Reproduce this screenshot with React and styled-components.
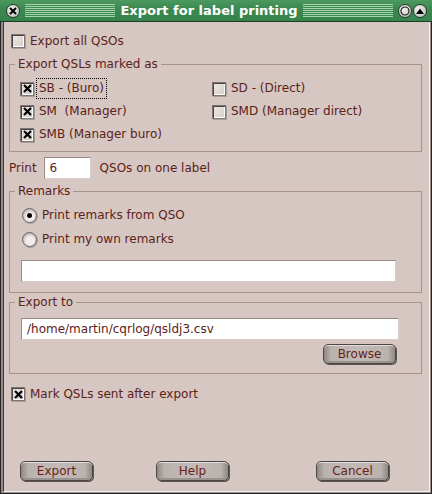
import React from "react";
import styled, { createGlobalStyle } from "styled-components";

const Global = createGlobalStyle`
  html, body { margin: 0; padding: 0; background: #d6c7c3; }
  body {
    font-family: "DejaVu Sans", "Liberation Sans", sans-serif;
    font-size: 12px;
    color: #5c2218;
  }
`;

const Window = styled.div`
  width: 432px;
  height: 494px;
  display: flex;
  flex-direction: column;
  box-sizing: border-box;
`;

const TitleBar = styled.div`
  height: 21px;
  flex: none;
  display: flex;
  align-items: center;
  background: linear-gradient(#4c9a60, #3b8850 40%, #37834c);
  border-bottom: 1px solid #1d3a26;
  padding: 0 5px 0 6px;
  gap: 5px;
`;

const Stripes = styled.div`
  flex: 1;
  height: 13px;
  background: repeating-linear-gradient(
    to bottom,
    #a3d2ab 0 1px,
    #3c8a52 1px 2px
  );
`;

const Title = styled.div`
  font-family: "DejaVu Sans", "Liberation Sans", sans-serif;
  font-weight: bold;
  font-size: 13px;
  color: #ffffff;
  white-space: nowrap;
  padding: 0 0 1px;
`;

const TitleButton = styled.span`
  width: 14px;
  height: 14px;
  border-radius: 50%;
  box-sizing: border-box;
  border: 1px solid #2a3a2e;
  background: radial-gradient(circle at 40% 35%, #f4f4f2, #c8c8c4 70%, #9c9c98);
  display: inline-flex;
  align-items: center;
  justify-content: center;
  flex: none;
`;

const TitleButtons = styled.div`
  display: flex;
  gap: 1px;
  flex: none;
`;

const Frame = styled.div`
  flex: 1;
  display: flex;
  border: 1px solid #2a2626;
  border-top: 0;
  padding: 0 1px 1px 2px;
  background: #948c8a;
`;

const Body = styled.div`
  flex: 1;
  display: flex;
  flex-direction: column;
  background: #d6c7c3;
  border-left: 1px solid #403838;
  border-right: 1px solid #f6f2f0;
  border-bottom: 1px solid #f6f2f0;
  padding: 0 7px 0 5px;
`;

const Row = styled.div`
  display: flex;
  align-items: center;
  height: ${(p) => p.$h || 20}px;
  margin-top: ${(p) => p.$mt || 0}px;
  padding-left: ${(p) => p.$pl || 0}px;
`;

const Group = styled.fieldset`
  margin: ${(p) => p.$mt || 0}px 0 0;
  padding: 0;
  border: 1px solid #a8928a;
  min-width: 0;
`;

const Legend = styled.legend`
  padding: 0 3px;
  margin-left: 5px;
  line-height: 14px;
  font-size: 12px;
  color: #5c2218;
`;

const GroupInner = styled.div`
  padding: ${(p) => p.$pad};
`;

const CheckGrid = styled.div`
  display: grid;
  grid-template-columns: 192px 1fr;
  grid-auto-rows: 23px;
  padding: 6px 0 5px 10px;
`;

const BoxOuter = styled.span`
  width: 14px;
  height: 14px;
  box-sizing: border-box;
  border: 1px solid #7e7472;
  background: linear-gradient(135deg, #f0eae8, #d4ccc8);
  box-shadow: inset 1px 1px 0 #4a4240, inset -1px -1px 0 #ffffff,
    1px 1px 0 #a89e9a;
  display: inline-flex;
  align-items: center;
  justify-content: center;
  flex: none;
  margin-right: 5px;
`;

const Label = styled.span`
  white-space: pre;
  line-height: 15px;
  padding: ${(p) => (p.$focus ? "2px 2px" : "0")};
  margin-left: ${(p) => (p.$focus ? "-2px" : "0")};
  outline: ${(p) => (p.$focus ? "1px dotted #000" : "none")};
`;

const CheckItem = ({ checked, children, focus }) => (
  <Row $h={23}>
    <BoxOuter>
      {checked && (
        <svg width="9" height="9" viewBox="0 0 9 9">
          <path d="M1 1 L8 8 M8 1 L1 8" stroke="#000" strokeWidth="2.2" />
        </svg>
      )}
    </BoxOuter>
    <Label $focus={focus}>{children}</Label>
  </Row>
);

const RadioOuter = styled.span`
  width: 15px;
  height: 15px;
  box-sizing: border-box;
  border-radius: 50%;
  border: 1px solid #6e6462;
  background: radial-gradient(circle at 55% 60%, #f2ecea 0 40%, #c2bab6 70%, #8e8684);
  box-shadow: 1px 1px 0 #a89e9a;
  display: inline-flex;
  align-items: center;
  justify-content: center;
  margin: 0 5px 0 1px;
  flex: none;
`;

const RadioDot = styled.span`
  width: 5px;
  height: 5px;
  border-radius: 50%;
  background: #000;
`;

const RadioItem = ({ checked, children }) => (
  <Row $h={24}>
    <RadioOuter>{checked && <RadioDot />}</RadioOuter>
    <Label>{children}</Label>
  </Row>
);

const TextField = styled.div`
  box-sizing: border-box;
  width: ${(p) => p.$w}px;
  height: ${(p) => p.$h || 22}px;
  margin-left: ${(p) => p.$ml || 0}px;
  margin-top: ${(p) => p.$mt || 0}px;
  background: #ffffff;
  border: 1px solid #9a8a86;
  border-bottom-color: #d8ccc8;
  border-right-color: #d8ccc8;
  display: flex;
  align-items: center;
  padding-left: 5px;
  color: #5c2218;
  white-space: nowrap;
`;

const Button = styled.div`
  box-sizing: border-box;
  width: ${(p) => p.$w || 73}px;
  height: 20px;
  margin-left: ${(p) => p.$ml || 0}px;
  border: 1px solid #4e4644;
  border-radius: 5px;
  background: linear-gradient(
    to right,
    #8e8682 0,
    #bab2ae 10%,
    #c2bab6 50%,
    #bab2ae 90%,
    #8e8682 100%
  );
  box-shadow: inset 0 1px 0 #e4dcda, inset 0 -2px 0 #9a928e, 1px 1px 0 #5a5250;
  display: flex;
  align-items: center;
  justify-content: center;
  color: #6a1e16;
  font-size: 12px;
`;

const ButtonRow = styled.div`
  display: flex;
  margin-top: auto;
  padding: 0 0 10px 11px;
`;

const BrowseRow = styled.div`
  display: flex;
  justify-content: flex-end;
  padding-right: 25px;
  margin-top: 4px;
`;

const Spacer = styled.span`
  width: ${(p) => p.$w}px;
  flex: none;
`;

export default function App() {
  return (
    <>
      <Global />
      <Window>
        <TitleBar>
          <TitleButton>
            <svg width="8" height="8" viewBox="0 0 8 8">
              <path d="M1 1 L7 7 M7 1 L1 7" stroke="#000" strokeWidth="2" />
            </svg>
          </TitleButton>
          <Stripes />
          <Title>Export for label printing</Title>
          <Stripes />
          <TitleButtons>
            <TitleButton>
              <svg width="10" height="10" viewBox="0 0 10 10">
                <circle cx="5" cy="5" r="4" fill="none" stroke="#222" strokeWidth="1.2" />
              </svg>
            </TitleButton>
            <TitleButton>
              <svg width="10" height="8" viewBox="0 0 10 8">
                <path d="M1 7 L5 1.5 L9 7 Z" fill="#000" />
              </svg>
            </TitleButton>
          </TitleButtons>
        </TitleBar>
        <Frame>
          <Body>
            <Row $mt={9} $pl={2}>
              <BoxOuter />
              <Label>Export all QSOs</Label>
            </Row>

            <Group $mt={6}>
              <Legend>Export QSLs marked as</Legend>
              <CheckGrid>
                <CheckItem checked focus>SB - (Buro)</CheckItem>
                <CheckItem>SD - (Direct)</CheckItem>
                <CheckItem checked>SM  (Manager)</CheckItem>
                <CheckItem>SMD (Manager direct)</CheckItem>
                <CheckItem checked>SMB (Manager buro)</CheckItem>
              </CheckGrid>
            </Group>

            <Row $h={22} $mt={5}>
              <Label>Print</Label>
              <TextField $w={47} $ml={7}>6</TextField>
              <Spacer $w={9} />
              <Label>QSOs on one label</Label>
            </Row>

            <Group $mt={5}>
              <Legend>Remarks</Legend>
              <GroupInner $pad="5px 0 10px 11px">
                <RadioItem checked>Print remarks from QSO</RadioItem>
                <RadioItem>Print my own remarks</RadioItem>
                <TextField $w={375} $mt={9} />
              </GroupInner>
            </Group>

            <Group $mt={2}>
              <Legend>Export to</Legend>
              <GroupInner $pad="9px 0 9px 11px">
                <TextField $w={378}>/home/martin/cqrlog/qsldj3.csv</TextField>
                <BrowseRow>
                  <Button>Browse</Button>
                </BrowseRow>
              </GroupInner>
            </Group>

            <Row $mt={10} $pl={2}>
              <BoxOuter>
                <svg width="9" height="9" viewBox="0 0 9 9">
                  <path d="M1 1 L8 8 M8 1 L1 8" stroke="#000" strokeWidth="2.2" />
                </svg>
              </BoxOuter>
              <Label>Mark QSLs sent after export</Label>
            </Row>

            <ButtonRow>
              <Button>Export</Button>
              <Button $ml={63}>Help</Button>
              <Button $ml={87}>Cancel</Button>
            </ButtonRow>
          </Body>
        </Frame>
      </Window>
    </>
  );
}
